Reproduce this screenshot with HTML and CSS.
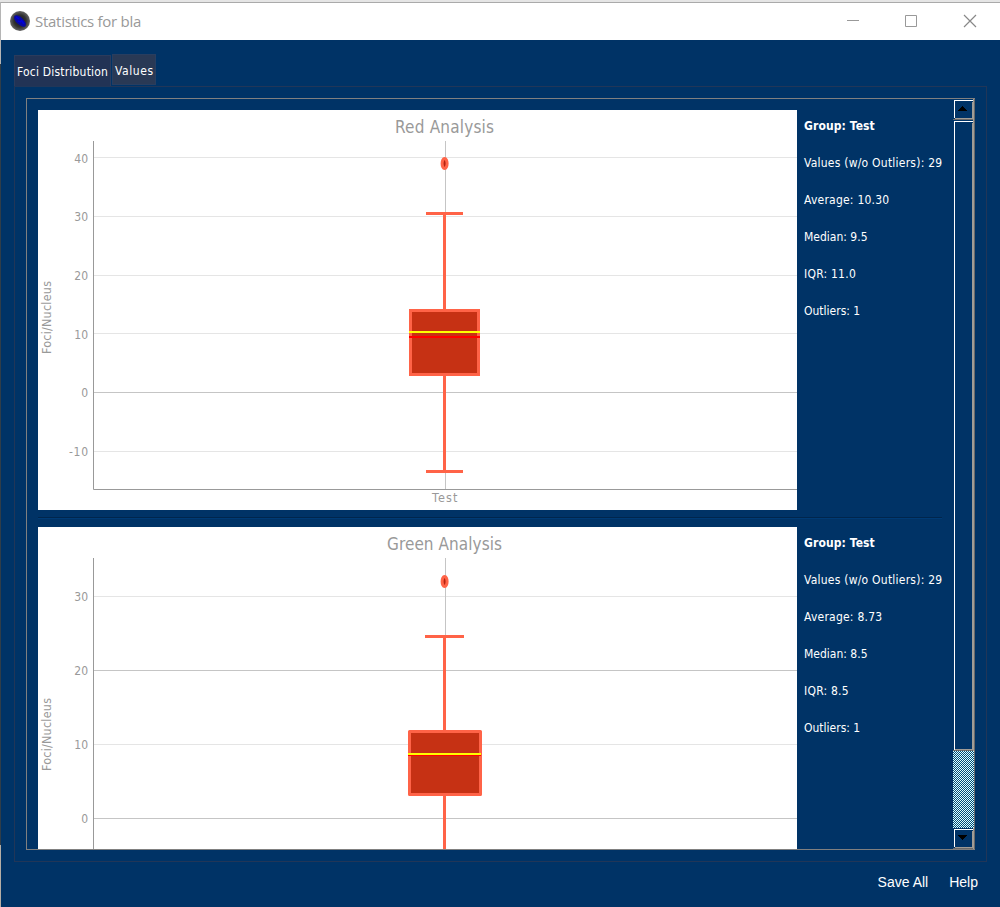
FILE: index.html
```html
<!DOCTYPE html>
<html lang="en">
<head>
<meta charset="utf-8">
<title>Statistics for bla</title>
<link rel="stylesheet" href="styles.css">
</head>
<body>
<div class="window">
  <header class="titlebar">
    <svg class="app-icon" width="20" height="20" viewBox="0 0 20 20">
      <defs><radialGradient id="cell"><stop offset="0" stop-color="#171717"/><stop offset=".6" stop-color="#303030"/><stop offset="1" stop-color="#666"/></radialGradient></defs>
      <circle cx="10" cy="10" r="10" fill="url(#cell)"/>
      <ellipse cx="10" cy="10" rx="7.5" ry="3.6" transform="rotate(44 10 10)" fill="#0808a5"/>
      <path d="M6 6l3 2M8 10l3 1M11 9l3 4" stroke="#0000e0" stroke-width="1.5"/>
    </svg>
    <h1 class="title">Statistics for bla</h1>
    <svg class="controls" width="132" height="14" viewBox="0 0 132 14" fill="none" stroke="#999">
      <path d="M0 6.5h12M58.5 1.500h11v11h-11z"/>
      <path d="M117 1l12 12M129 1l-12 12" stroke="#888" stroke-width="1.2"/>
    </svg>
  </header>
  <nav class="tabs">
    <div class="tab">Foci Distribution</div>
    <div class="tab tab-active">Values</div>
  </nav>
  <main class="pane">
    <div class="scroll">
      <div class="content">
        <section class="group">
          <svg class="chart" width="759" height="400" viewBox="38 110 759 400">
            <g class="grid"><path d="M94 157.5h703M94 216.5h703M94 275.5h703M94 333.5h703M94 451.5h703"/><path class="major" d="M94 392.5h703M445.5 141v348"/></g>
            <path class="axis" d="M93.5 141v348.5h703.5"/>
            <g class="whisker"><path d="M444.5 212v98M444.5 375v97M426 213.5h37M426 471.5h37"/><rect class="box" x="410.5" y="310.5" width="68" height="64"/></g>
            <path class="median" d="M409 337h71"/><path class="mean" d="M409 332h71"/>
            <ellipse class="outlier" cx="444.6" cy="163.5" rx="2.5" ry="5"/>
            <text class="heading" x="395" y="133" textLength="99">Red Analysis</text>
            <g class="ticks"><text x="88" y="163">40</text><text x="88" y="221">30</text><text x="88" y="280">20</text><text x="88" y="339">10</text><text x="88" y="397">0</text><text x="88" y="456" textLength="19">-10</text></g>
            <text class="label" x="432" y="502" textLength="25.5">Test</text>
            <text class="label" transform="translate(51 354) rotate(-90)" textLength="73">Foci/Nucleus</text>
          </svg>
          <div class="stats">
            <p class="name">Group: Test</p><p class="count">Values (w/o Outliers): 29</p><p>Average: 10.30</p><p class="tight">Median: 9.5</p><p>IQR: 11.0</p><p class="tight">Outliers: 1</p>
          </div>
        </section>
        <hr class="divider">
        <section class="group">
          <svg class="chart" width="759" height="400" viewBox="38 527 759 400">
            <g class="grid"><path d="M94 596.5h703M94 744.5h703"/><path class="major" d="M94 670.5h703M94 818.5h703M445.5 558v348"/></g>
            <path class="axis" d="M93.5 558v348.5h703.5"/>
            <g class="whisker"><path d="M444.5 635v96M444.5 795v100M425 636.5h39"/><rect class="box" x="409.5" y="731.5" width="71" height="63" stroke-linejoin="round"/></g>
            <path class="median" d="M408 755h73"/><path class="mean" d="M408 754h73"/>
            <ellipse class="outlier" cx="444.6" cy="581.5" rx="2.5" ry="5"/>
            <text class="heading" x="387" y="550" textLength="115">Green Analysis</text>
            <g class="ticks"><text x="88" y="601">30</text><text x="88" y="675">20</text><text x="88" y="749">10</text><text x="88" y="823">0</text></g>
            <text class="label" transform="translate(51 771) rotate(-90)" textLength="73">Foci/Nucleus</text>
          </svg>
          <div class="stats">
            <p class="name">Group: Test</p><p class="count">Values (w/o Outliers): 29</p><p>Average: 8.73</p><p class="tight">Median: 8.5</p><p>IQR: 8.5</p><p class="tight">Outliers: 1</p>
          </div>
        </section>
      </div>
      <svg class="scrollbar" width="22" height="750" viewBox="953 99 22 750" shape-rendering="crispEdges">
        <defs><pattern id="dither" width="2" height="2" patternUnits="userSpaceOnUse"><rect width="2" height="2" fill="#004a78"/><path d="M0 0h1v1h-1zM1 1h1v1h-1z" fill="#e0ffff"/></pattern></defs>
        <path d="M973.5 99v750" stroke="#a09c96"/><path d="M974.5 99v750" stroke="#696969"/>
        <rect x="953" y="751" width="21" height="77" fill="url(#dither)"/>
        <g fill="none">
          <path d="M954.5 118v-17.500h18" stroke="#fff"/><path d="M955 118.500h17.500v-17" stroke="#a09c96"/><path d="M953 119.500h20" stroke="#696969"/>
          <path d="M954.5 750v-628.500h18" stroke="#fff"/><path d="M955 749.5h17.500v-627" stroke="#a09c96"/><path d="M953 750.500h20" stroke="#696969"/>
          <path d="M954.5 847v-17.500h18" stroke="#fff"/><path d="M955 847.500h17.500v-17" stroke="#a09c96"/><path d="M953 848.500h20" stroke="#696969"/>
        </g>
        <path d="M962 106h1v1h1v1h1v1h1v1h1v1h-9v-1h1v-1h1v-1h1v-1h1z"/>
        <path d="M958 835h9v1h-1v1h-1v1h-1v1h-1v1h-1v-1h-1v-1h-1v-1h-1v-1h-1z"/>
      </svg>
    </div>
  </main>
  <footer class="actions"><span class="save">Save All</span><span class="help">Help</span></footer>
</div>
</body>
</html>
```
FILE: styles.css
```css
* { box-sizing: border-box; }
body {
  margin: 0;
  height: 907px;
  padding: 2px 0 0 1px;
  overflow: hidden;
  background: linear-gradient(#e5e5e5 2px, #b5b5b5 2px 64px, #303d48 64px 845px, #b5aea5 845px);
  font-family: "DejaVu Sans Condensed", "DejaVu Sans", sans-serif;
  font-stretch: condensed;
  font-size: 12px;
}
.window { height: 905px; display: flex; flex-direction: column; background: #003366; border-top: 1px solid #aaa; }
.titlebar { height: 37px; display: flex; align-items: center; background: #fff; padding-left: 9px; flex: none; }
.app-icon { display: block; margin-top: -1px; }
.title { margin: -2px auto 0 5px; font: 400 15px/20px "Open Sans", sans-serif; color: #999; letter-spacing: -0.27px; }
.controls { margin-right: 21px; margin-top: -1px; }
.tabs { height: 46px; flex: none; display: flex; align-items: flex-start; gap: 1px; padding: 14px 0 0 13px; color: #fff; }
.tab { width: 97px; height: 32px; margin-top: 1px; border: 1px solid #2b3b5c; border-bottom: 0; background: #223355; padding-left: 2px; line-height: 32px; white-space: nowrap; letter-spacing: 0.2px; }
.tab-active { width: 44px; height: 31px; margin-top: 0; border: 1px solid #283e60; background: #293955; letter-spacing: 0.6px; }
.pane { flex: none; height: 776px; margin: 0 13px; border: 1px solid #213658; padding: 11px; }
.scroll { height: 752px; border: 1px solid #808080; border-right: 0; display: flex; justify-content: space-between; overflow: hidden; }
.content { width: 915px; padding: 11px 0 0 11px; height: 750px; overflow: hidden; }
.group { display: flex; height: 400px; }
.chart { display: block; flex: none; background: #fff; }
.stats { padding: 7px 0 0 7px; color: #fff; letter-spacing: 0.23px; }
.stats p { height: 37px; margin: 0; line-height: 18px; white-space: nowrap; }
.stats .name { font-weight: 700; letter-spacing: 0.1px; }
.stats .tight { letter-spacing: 0; }
.divider { width: 904px; border: 0; border-top: 1px solid #00264d; border-bottom: 1px solid #003b75; height: 2px; margin: 7px 0 8px; }
.scrollbar { display: block; flex: none; }
.actions { display: flex; justify-content: flex-end; gap: 21px; padding: 11px 22px 0 0; font: 14px/18px "Liberation Sans", sans-serif; color: #fff; }
.grid path { stroke: #e5e5e5; fill: none; }
.grid .major { stroke: #c5c5c5; }
.axis { stroke: #999; fill: none; }
.whisker { stroke: #ff6347; stroke-width: 3; fill: none; }
.box { fill: #c63114; }
.mean { stroke: #ffff00; stroke-width: 2; }
.median { stroke: #ff0000; stroke-width: 2; }
.outlier { fill: #b52310; stroke: #ff6347; stroke-width: 3; }
.heading { font-size: 17px; fill: #999; }
.ticks { text-anchor: end; fill: #999; }
.label { font-size: 12.5px; fill: #999; }
```
